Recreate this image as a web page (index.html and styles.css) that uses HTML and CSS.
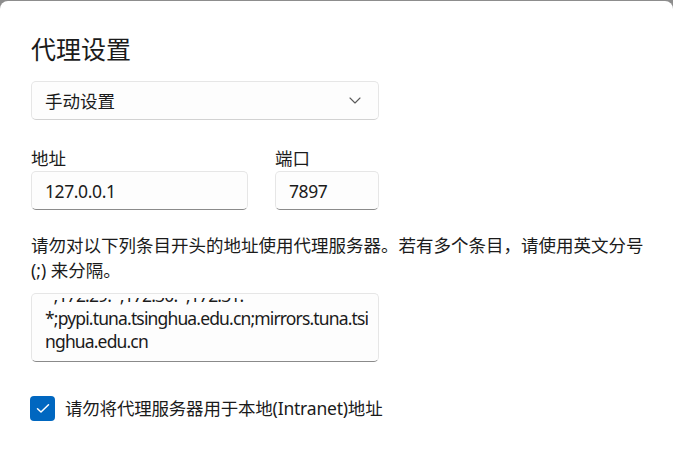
FILE: index.html
```html
<!DOCTYPE html>
<html lang="zh-CN">
<head>
<meta charset="utf-8">
<title>代理设置</title>
<link rel="stylesheet" href="styles.css">
</head>
<body>
<div class="dialog">
  <h1 class="title">代理设置</h1>
  <div class="select">
    <span class="select-text">手动设置</span>
    <svg class="chevron" width="12" height="7" viewBox="0 0 12 7"><path d="M1 1 L6 6 L11 1" fill="none" stroke="#5a5a5a" stroke-width="1.1" stroke-linecap="round" stroke-linejoin="round"/></svg>
  </div>
  <div class="fields">
    <div class="field field-addr">
      <div class="label">地址</div>
      <div class="input">127.0.0.1</div>
    </div>
    <div class="field field-port">
      <div class="label">端口</div>
      <div class="input">7897</div>
    </div>
  </div>
  <p class="desc">请勿对以下列条目开头的地址使用代理服务器。若有多个条目，请使用英文分号 (;) 来分隔。</p>
  <div class="textbox">
    <div class="textbox-clip">
      <div class="textbox-lines">
        <div class="tline">*;172.29.*;172.30.*;172.31.</div>
        <div class="tline">*;pypi.tuna.tsinghua.edu.cn;mirrors.tuna.tsi</div>
        <div class="tline">nghua.edu.cn</div>
      </div>
    </div>
  </div>
  <label class="check">
    <span class="checkbox">
      <svg width="14" height="11" viewBox="0 0 14 11"><path d="M1.5 5.8 L5 9 L12.5 1.8" fill="none" stroke="#ffffff" stroke-width="1.5" stroke-linecap="round" stroke-linejoin="round"/></svg>
    </span>
    <span class="check-text">请勿将代理服务器用于本地(Intranet)地址</span>
  </label>
</div>
</body>
</html>
```

FILE: styles.css
```css
html, body {
  margin: 0;
  padding: 0;
  height: 100%;
}
body {
  background: #8d8d8d;
  font-family: "Noto Sans", "Noto Sans CJK SC", sans-serif;
  color: #1b1b1b;
  overflow: hidden;
}
.dialog {
  box-sizing: border-box;
  margin-top: 1px;
  height: calc(100% - 1px);
  background: #ffffff;
  border-radius: 8px 8px 0 0;
  padding: 32px 31px 0 31px;
  display: flex;
  flex-direction: column;
  align-items: flex-start;
}
.title {
  margin: 0;
  font-size: 25px;
  line-height: 32px;
  font-weight: 400;
  font-family: "Noto Sans", "Noto Sans CJK SC", sans-serif;
}
.select {
  box-sizing: border-box;
  margin-top: 16px;
  width: 348px;
  height: 39px;
  border: 1px solid #e6e6e6;
  border-bottom-color: #d2d2d2;
  border-radius: 5px;
  background: #fdfdfd;
  display: flex;
  align-items: center;
  justify-content: space-between;
  padding: 0 17px 0 13px;
  font-size: 17.5px;
}
.chevron {
  display: block;
}
.fields {
  display: flex;
  gap: 27px;
  margin-top: 26px;
}
.field {
  display: flex;
  flex-direction: column;
}
.label {
  font-size: 17.5px;
  line-height: 24px;
  margin-bottom: 1px;
}
.input {
  box-sizing: border-box;
  height: 39px;
  border: 1px solid #e6e6e6;
  border-bottom: 1px solid #8a8a8a;
  border-radius: 5px;
  background: #fdfdfd;
  display: flex;
  align-items: center;
  padding: 0 13px;
  font-size: 17.5px;
  letter-spacing: -0.4px;
}
.field-addr .input { width: 217px; }
.field-port .input { width: 104px; }
.desc {
  margin: 23px 0 0 0;
  width: 620px;
  font-size: 17.5px;
  line-height: 25px;
}
.textbox {
  box-sizing: border-box;
  margin-top: 10px;
  width: 348px;
  height: 69px;
  border: 1px solid #e6e6e6;
  border-bottom: 1px solid #8a8a8a;
  border-radius: 5px;
  background: #fdfdfd;
  padding: 4px 10px 0 13px;
}
.textbox-clip {
  height: 62px;
  overflow: hidden;
}
.textbox-lines {
  margin-top: -14px;
}
.tline {
  font-size: 17.5px;
  line-height: 23px;
  white-space: nowrap;
  letter-spacing: -0.85px;
}
.check {
  margin-top: 34px;
  margin-left: -1px;
  display: flex;
  align-items: center;
  gap: 10px;
}
.checkbox {
  box-sizing: border-box;
  width: 25px;
  height: 25px;
  border-radius: 4px;
  background: #0067c0;
  display: flex;
  align-items: center;
  justify-content: center;
}
.checkbox svg { display: block; }
.check-text {
  font-size: 17.5px;
  line-height: 25px;
  letter-spacing: -0.2px;
}
```
